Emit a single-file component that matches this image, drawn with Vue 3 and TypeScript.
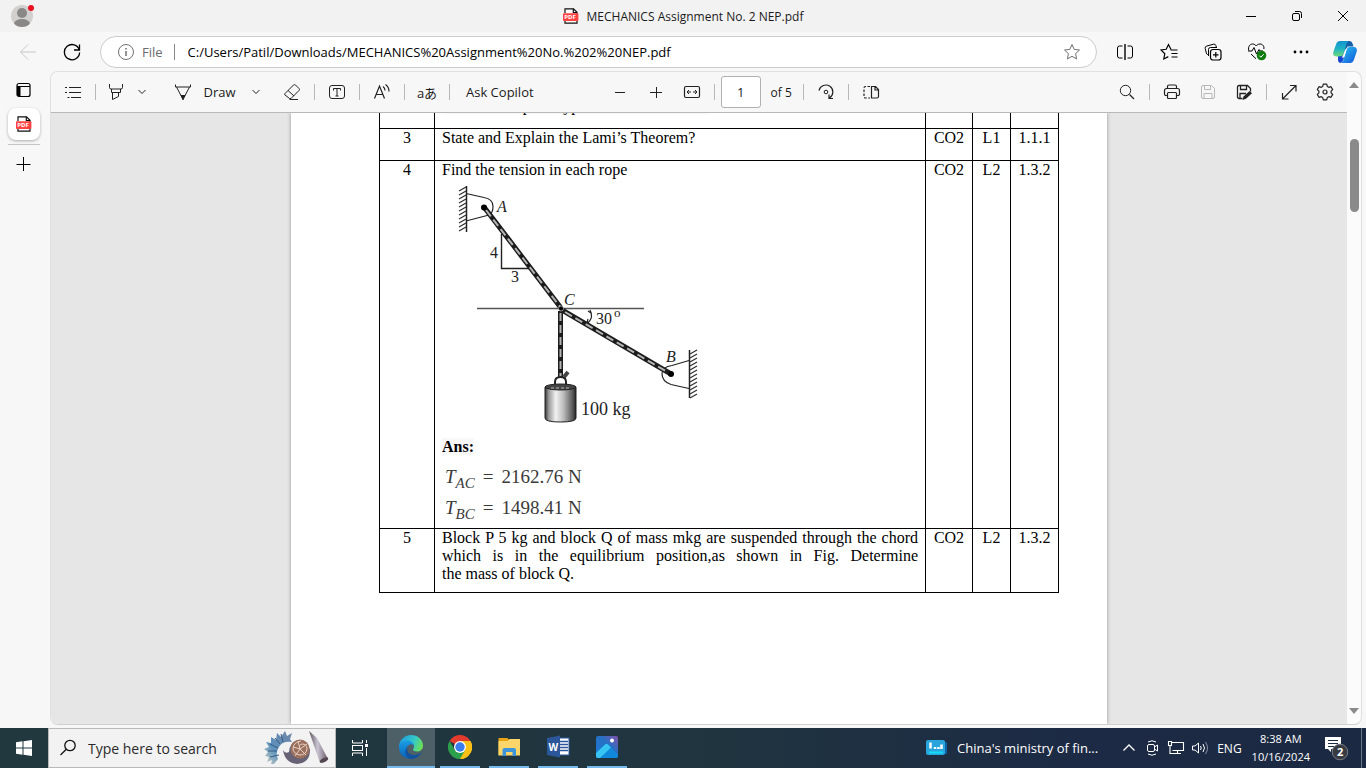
<script setup lang="ts">
import { ref } from 'vue'

interface Row {
  no: string
  co: string
  level: string
  code: string
  kind: 'text' | 'marked' | 'figure' | 'lines'
  lines: string[]
}

const url = ref('C:/Users/Patil/Downloads/MECHANICS%20Assignment%20No.%202%20NEP.pdf')
const page = ref('1')
const query = ref('')

const rows: Row[] = [
  { no: '2', co: 'CO2', level: 'L1', code: '1.1.1', kind: 'marked', lines: ['State and Explain types of Friction force?'] },
  { no: '3', co: 'CO2', level: 'L1', code: '1.1.1', kind: 'text', lines: ['State and Explain the Lami’s Theorem?'] },
  { no: '4', co: 'CO2', level: 'L2', code: '1.3.2', kind: 'figure', lines: ['Find the tension in each rope'] },
  {
    no: '5',
    co: 'CO2',
    level: 'L2',
    code: '1.3.2',
    kind: 'lines',
    lines: [
      'Block P 5 kg and block Q of mass mkg are suspended through the chord',
      'which is in the equilibrium position,as shown in Fig. Determine',
      'the mass of block Q.',
    ],
  },
]

const results = [
  { sub: 'AC', value: '2162.76 N' },
  { sub: 'BC', value: '1498.41 N' },
]

const hatchA = Array.from({ length: 11 }, (_, i) => `M466 ${187 + i * 4}l-7 4`).join('')
const hatchB = Array.from({ length: 12 }, (_, i) => `M690 ${354 + i * 4}l7 -4`).join('')
</script>

<template>
  <div class="screen">
    <header class="titlebar">
      <button class="avatar" aria-label="Profile">
        <svg width="24" height="24" viewBox="0 0 24 24">
          <defs><clipPath id="av"><circle cx="11" cy="12" r="11" /></clipPath></defs>
          <g clip-path="url(#av)">
            <rect width="24" height="24" fill="#d2d0ce" />
            <circle cx="11" cy="9" r="5" fill="#8a8886" />
            <ellipse cx="11" cy="20" rx="8" ry="5" fill="#8a8886" />
          </g>
          <circle cx="20" cy="4" r="3" fill="#e81123" />
        </svg>
      </button>
      <div class="doc-title">
        <svg width="16" height="16" viewBox="0 0 16 16">
          <path d="M2 5V.8h8.5L14 4.3V15.2H2V12" fill="#fff" stroke="#111" stroke-width="1.2" />
          <path d="M10.3.8v3.8H14" fill="none" stroke="#111" stroke-width="1.2" />
          <rect x="0" y="5.2" width="15.4" height="7.8" rx="1" fill="#ff4242" />
          <text x="1.3" y="11.4" class="pdf-mark">PDF</text>
        </svg>
        <span>MECHANICS Assignment No. 2 NEP.pdf</span>
      </div>
      <div class="window-controls">
        <button aria-label="Minimize"><svg width="12" height="12"><path d="M1 6.5h10" /></svg></button>
        <button aria-label="Restore">
          <svg width="12" height="12"><rect x="1.5" y="3.5" width="7" height="7" rx="1.5" /><path d="M4 1.5h4.5a2 2 0 0 1 2 2V8" /></svg>
        </button>
        <button aria-label="Close"><svg width="12" height="12"><path d="M1 1l10 10M11 1L1 11" /></svg></button>
      </div>
    </header>

    <nav class="navbar">
      <button class="nav-btn back" aria-label="Back">
        <svg width="18" height="18"><path d="M17 9H1.5M9 1.5L1.5 9l7.5 7.5" /></svg>
      </button>
      <button class="nav-btn reload" aria-label="Refresh">
        <svg width="18" height="18"><path d="M16.3 7A7.6 7.6 0 1 0 16.6 9.5M16.5 1.5V7H11" stroke-width="1.3" /></svg>
      </button>
      <div class="address">
        <button class="file-info">
          <svg width="18" height="18"><circle cx="9" cy="9" r="7.5" /><path d="M9 8v5M9 5v1.5" stroke-width="1.5" /></svg>
          <span>File</span>
        </button>
        <input v-model="url" aria-label="Address" spellcheck="false" />
        <button class="star" aria-label="Add to favorites">
          <svg width="18" height="18"><path d="M9 1.5l2.2 4.9 5.3.6-3.9 3.6 1 5.3L9 13.3l-4.6 2.6 1-5.3L1.500 7l5.300-.6z" /></svg>
        </button>
      </div>
      <div class="nav-tools">
        <button aria-label="Split screen">
          <svg width="18" height="18"><path d="M6.500 3H3.500a2 2 0 0 0-2 2v8a2 2 0 0 0 2 2h3M11.500 3h3a2 2 0 0 1 2 2v8a2 2 0 0 1-2 2h-3" /><path d="M9 1v16" stroke-width="1.400" /></svg>
        </button>
        <button aria-label="Favorites">
          <svg width="18" height="18"><path d="M11 6.500L8.500 1.500 6.200 6.300 1 7l3.800 3.700-1 5.300 4.500-2.400M10.500 7h7M11.500 10.500h6M11.500 14h6" stroke-width="1.200" /></svg>
        </button>
        <button aria-label="Collections">
          <svg width="18" height="18"><rect x="6.500" y="6.500" width="10.500" height="10.500" rx="2.500" stroke-width="1.200" /><path d="M11.800 9v5.500M9 11.800h5.500" stroke-width="1.200" /><path d="M5 13L3.500 11.500a2 2 0 0 1-1.200-1.500L1.200 5.500a2 2 0 0 1 1.500-2.400L9.500 1.200a2 2 0 0 1 2.400 1.400l.4 1.400M4.500 12V6.500a2 2 0 0 1 2-2H13" /></svg>
        </button>
        <button aria-label="Browser essentials">
          <svg width="20" height="20"><path d="M1.800 8.500C.8 4.500 3 2 5.500 2 7.500 2 8.500 3 9.200 4c.8-1 1.800-2 3.800-2 2.500 0 4.600 2.300 3.800 5M4 12l5 4.800M1 9h4l2-3.500 2.500 6.500L12 7.500l1 1.500h3" /><circle cx="14.500" cy="13.500" r="4.800" fill="#107c10" stroke="none" /><path d="M12.400 13.700l1.500 1.500 2.800-3" stroke="#fff" /></svg>
        </button>
        <button aria-label="Settings and more">
          <svg width="18" height="18" class="solid"><circle cx="3" cy="9" r="1.400" /><circle cx="9" cy="9" r="1.400" /><circle cx="15" cy="9" r="1.400" /></svg>
        </button>
        <button aria-label="Copilot">
          <svg width="24" height="24" class="solid">
            <defs>
              <linearGradient id="cp1" x1="0" y1="0" x2="0" y2="1"><stop offset="0" stop-color="#1493ce" /><stop offset=".5" stop-color="#20b2c4" /><stop offset="1" stop-color="#6fdc78" /></linearGradient>
              <linearGradient id="cp2" x1="0" y1="0" x2="1" y2="1"><stop offset="0" stop-color="#26c7f3" /><stop offset="1" stop-color="#1552d8" /></linearGradient>
            </defs>
            <path d="M8 1h8.500c2.500 0 3.300 3 4 5.500h-6L8 20c-.8 2-2.600 2-3 0z" fill="#155fa8" />
            <path d="M7 1h9c-2 1-2.600 3-3.200 5.500L10.500 14c-.6 1.700-1.700 2.500-3.500 2.500H3C.3 16.500-.2 14 .3 12L3 4.500C3.800 2 5 1 7 1z" fill="url(#cp1)" />
            <path d="M17 7h4c2.500 0 3.300 2.500 2.700 4.500L21 19.500c-.8 2.500-2 3.500-4 3.500H8c2-1 2.600-3 3.200-5.500L13.500 9.500C14.100 7.800 15.200 7 17 7z" fill="url(#cp2)" />
            <path d="M5 16.500h5l1 1c-.8 3-2 5.500-4 5.500-1.500 0-2-3-2-6.500z" fill="#1646d4" />
            <path d="M13.200 8.500c-.8.600-1.300 1.500-1.700 2.800l-1.300 4c-.3 1-.8 1.700-1.500 2.200l1.600.2c.8-.6 1.200-1.400 1.600-2.600l1.300-4.400c.3-.9.700-1.600 1.300-2.100z" fill="#fff" />
          </svg>
        </button>
      </div>
    </nav>

    <div class="middle">
      <aside class="tabs">
        <button class="side-btn" aria-label="Tab actions">
          <svg width="16" height="16"><rect x="1" y="1.500" width="13" height="13" rx="2" fill="none" stroke="#000" stroke-width="1.200" /><path d="M1 4h3.500v10.500H2.500L1 13zM1 4h13v1H1z" /></svg>
        </button>
        <button class="tab-card" aria-label="MECHANICS Assignment No. 2 NEP.pdf">
          <svg width="16" height="16" viewBox="0 0 16 16">
            <path d="M2 5V.8h8.500L14 4.300V15.200H2V12" fill="#fff" stroke="#111" stroke-width="1.200" />
            <path d="M10.300.8v3.800H14" fill="none" stroke="#111" stroke-width="1.200" />
            <rect x="0" y="5.200" width="15.400" height="7.800" rx="1" fill="#ff4242" />
            <text x="1.300" y="11.400" class="pdf-mark">PDF</text>
          </svg>
        </button>
        <hr />
        <button class="side-btn plus" aria-label="New tab">
          <svg width="16" height="16"><path d="M7.500 1v14M.5 8.500h14" stroke="#000" /></svg>
        </button>
      </aside>

      <main class="viewer">
        <div class="content">
          <div class="toolbar">
            <div class="group start">
              <button aria-label="Contents"><svg width="18" height="18"><path d="M5 4.500h12M5 9.500h12M7 14.500h10M1 4.500h2M1 9.500h2M3.500 14.500h2" /></svg></button>
              <i class="sep"></i>
              <button class="mark" aria-label="Highlight"><svg width="18" height="18"><path d="M2.500 1v3.500a1.500 1.500 0 0 0 1.500 1.500h10a1.500 1.500 0 0 0 1.500-1.500V1M4.500 6v3.500h9V6M5.500 9.500v7l6-3V9.500" /></svg></button>
              <button class="chev" aria-label="Highlight colors"><svg width="8" height="6"><path d="M.5 1L4 4.500 7.500 1" /></svg></button>
              <button class="draw"><svg width="18" height="18"><path d="M1.500 1.500V4h15V1.500M2.500 4L9 16.500 15.500 4M6.800 12.500h4.400" /><path d="M7.500 13h3L9 16.500z" fill="#222" /></svg><span>Draw</span></button>
              <button class="chev" aria-label="Draw options"><svg width="8" height="6"><path d="M.5 1L4 4.500 7.500 1" /></svg></button>
              <button class="erase" aria-label="Erase"><svg width="18" height="18"><path d="M2 10.500L10.500 2a1.500 1.500 0 0 1 2 0L16 5.500a1.500 1.500 0 0 1 0 2L8 15.500H6.500L2 12a1.200 1.200 0 0 1 0-1.500zM5 7.500l6 5.500M6.500 16.500H15" /></svg></button>
              <i class="sep"></i>
              <button aria-label="Add text"><svg width="18" height="18"><rect x="1.500" y="2.500" width="15" height="13" rx="2.500" /><path d="M5.500 7.500V5.500h7v2M9 5.500v7.500M7.500 13h3" /></svg></button>
              <i class="sep"></i>
              <button aria-label="Read aloud"><svg width="18" height="18"><path d="M1.500 15.500L6.500 3l5 12.500M3.300 11.500h6.500M10 3.500q2 1.500 2 4M12.500 1.500q3.500 2.500 3.500 7" stroke-width="1.200" /></svg></button>
              <i class="sep"></i>
              <button class="translate" aria-label="Translate">aあ</button>
              <i class="sep"></i>
              <button class="ask">Ask Copilot</button>
            </div>
            <div class="group middle-group">
              <button aria-label="Zoom out"><svg width="18" height="18"><path d="M4 9.500h10" /></svg></button>
              <button aria-label="Zoom in"><svg width="18" height="18"><path d="M3 9.500h12M9.500 4v11" /></svg></button>
              <button aria-label="Fit to width"><svg width="18" height="18"><rect x="1.500" y="3.500" width="15" height="11" rx="1.500" stroke-width="1.200" /><path d="M4 9h4M10 9h4M6 7L4 9l2 2M12 7l2 2-2 2" /></svg></button>
              <i class="sep"></i>
              <label class="page-no"><input v-model="page" aria-label="Page number" /><span>of 5</span></label>
              <i class="sep"></i>
              <button aria-label="Rotate"><svg width="18" height="18"><path d="M2 7.500a7 7 0 1 1 10.500 7.500M16 15.500h-4v-4" stroke-width="1.200" /><circle cx="9" cy="9" r="1.800" /></svg></button>
              <i class="sep"></i>
              <button aria-label="Page view"><svg width="18" height="18"><path d="M9.500 3.500h4l3 3v7a1.500 1.500 0 0 1-1.500 1.500H9.500zM13 3.500v3.500h3.500" stroke-width="1.200" /><path d="M8 3.500H3.500A1.500 1.500 0 0 0 2 5v8.500A1.500 1.500 0 0 0 3.500 15H8" stroke-dasharray="2.500 1.500" stroke-width="1.200" /></svg></button>
            </div>
            <div class="group end">
              <button aria-label="Find"><svg width="18" height="18"><circle cx="7.500" cy="7.500" r="5.200" /><path d="M11.500 11.500l4.500 4.500" stroke-width="1.200" /></svg></button>
              <i class="sep"></i>
              <button aria-label="Print"><svg width="18" height="18"><path d="M4.500 12.500H3A1.500 1.500 0 0 1 1.500 11V7.500a2 2 0 0 1 2-2h11a2 2 0 0 1 2 2V11a1.500 1.500 0 0 1-1.500 1.500h-1.500M4.500 5.500V3.500a1.500 1.500 0 0 1 1.500-1.500h6a1.500 1.500 0 0 1 1.500 1.500v2" stroke-width="1.200" /><rect x="4.500" y="9.500" width="9" height="6" rx="1" stroke-width="1.200" /></svg></button>
              <button class="dim" aria-label="Save" disabled><svg width="18" height="18"><path d="M2.500 4A1.500 1.500 0 0 1 4 2.500h8.500l3 3V14a1.500 1.500 0 0 1-1.500 1.500H4A1.500 1.500 0 0 1 2.500 14zM5.500 2.500v4h6v-4M5 15.500v-5h8v5" /></svg></button>
              <button aria-label="Save as"><svg width="18" height="18"><path d="M7.500 15.500H4A1.500 1.500 0 0 1 2.500 14V4A1.500 1.500 0 0 1 4 2.500h8.500l3 3v3M5.500 2.500v4h6v-4M5 15.500v-5h6" stroke-width="1.300" /><path d="M7.500 17l1-3.500 6-5.500 2.500 2.300-6 5.500z" fill="#222" stroke="none" /></svg></button>
              <i class="sep"></i>
              <button aria-label="Full screen"><svg width="18" height="18"><path d="M2.500 16L16 2.500M10 2.500h6v6M2.500 10v6h6" stroke-width="1.200" /></svg></button>
              <button aria-label="Settings"><svg width="18" height="18"><path d="M7.300 1.200h3.400l.6 2.200 1.500.9 2.200-.6 1.700 2.900L15.100 8.200v1.600l1.600 1.600-1.700 2.900-2.200-.6-1.500.9-.6 2.200H7.300l-.6-2.200-1.500-.9-2.200.6-1.700-2.900 1.600-1.600V8.200L1.300 6.600 3 3.700l2.200.6 1.500-.9z" stroke-linejoin="round" stroke-width="1.200" /><circle cx="9" cy="9" r="2" stroke-width="1.200" /></svg></button>
            </div>
          </div>

          <div class="canvas">
            <article class="paper">
              <table>
                <colgroup>
                  <col class="c-no" />
                  <col />
                  <col class="c-co" />
                  <col class="c-level" />
                  <col class="c-code" />
                </colgroup>
                <tbody>
                  <tr v-for="r in rows" :key="r.no" :class="r.kind">
                    <td class="mid">{{ r.no }}</td>
                    <td>
                      <p v-for="(line, i) in r.lines" :key="i" :class="{ full: i < r.lines.length - 1 }"><span>{{ line }}</span></p>
                      <template v-if="r.kind === 'figure'">
                        <svg class="figure" width="256" height="250" viewBox="442 184 256 250" role="img" aria-label="Rope diagram">
                          <defs>
                            <linearGradient id="can" x1="0" x2="1">
                              <stop offset="0" stop-color="#333" /><stop offset=".12" stop-color="#999" /><stop offset=".35" stop-color="#f2f2f2" /><stop offset=".6" stop-color="#bbb" /><stop offset=".9" stop-color="#555" /><stop offset="1" stop-color="#222" />
                            </linearGradient>
                          </defs>
                          <g fill="none" stroke="#222">
                            <path :d="hatchA" stroke="#333" stroke-width="1.300" />
                            <path d="M466.500 186v46" stroke-width="1.500" />
                            <path d="M466 193.500l18 4c6 1 9 4 9 9 0 4-1 7-4 8.500l-23 6" stroke-width="1.200" />
                            <path d="M501.500 234v34.500H530" stroke-width="1.400" />
                            <path d="M477 308.500H644" stroke="#555" stroke-width="1.500" />
                            <path :d="hatchB" stroke="#333" stroke-width="1.300" />
                            <path d="M689.500 350v48" stroke-width="1.500" />
                            <path d="M689 360.500l-17 5c-7 1-10 4-10 8 0 6 3 9 9 11l18 4" stroke-width="1.200" />
                            <path d="M590 310q4 7-2 13M588 311l3 2M587 323l1-4" stroke-width="1.200" />
                            <path class="rope" d="M484 207L561 308M562 310L671 374M560.500 311V378" />
                            <path class="strand" d="M486 210L561 308M565 312L669 373M560.500 313V378" />
                            <path d="M564 377l4-5" stroke-width="4" stroke="#444" />
                            <path d="M555 386v-4q0-5 5.500-5t5.500 5v4" stroke-width="2" />
                          </g>
                          <path d="M545 387v31q0 4 15.500 4t15.500-4v-31z" fill="url(#can)" stroke="#222" />
                          <ellipse cx="560.500" cy="387" rx="15.500" ry="3" fill="#444" stroke="#222" />
                          <path d="M551 388h18" stroke="#bbb" stroke-dasharray="3 2" />
                          <circle cx="484" cy="207.500" r="3" /><circle cx="671" cy="374" r="3" />
                          <circle cx="561" cy="308.500" r="2.500" stroke="#fff" stroke-width=".5" />
                          <g class="labels">
                            <text x="497" y="212" class="it">A</text>
                            <text x="490" y="258">4</text>
                            <text x="511" y="282">3</text>
                            <text x="564" y="305" class="it">C</text>
                            <text x="596" y="324">30</text>
                            <text x="614" y="317" class="small">o</text>
                            <text x="666" y="362" class="it">B</text>
                            <text x="581" y="415" class="big">100 kg</text>
                          </g>
                        </svg>
                        <p class="ans"><b>Ans:</b></p>
                        <p v-for="x in results" :key="x.sub" class="eq"><i>T<sub>{{ x.sub }}</sub></i><span>=</span><span>{{ x.value }}</span></p>
                      </template>
                    </td>
                    <td class="mid">{{ r.co }}</td>
                    <td class="mid">{{ r.level }}</td>
                    <td class="mid">{{ r.code }}</td>
                  </tr>
                </tbody>
              </table>
            </article>
          </div>
        </div>
        <div class="scrollbar">
          <svg width="10" height="6"><path d="M0 6L5 0l5 6z" fill="#8a8a8a" /></svg>
          <div class="thumb"></div>
          <svg class="down" width="10" height="6"><path d="M0 0L5 6l5-6z" fill="#8a8a8a" /></svg>
        </div>
      </main>
    </div>

    <footer class="taskbar">
      <button class="start-btn" aria-label="Start">
        <svg width="16" height="16" fill="#fff"><path d="M0 2.300L6.500 1.300V7.500H0zM7.500 1.200L16 0v7.500H7.500zM0 8.500h6.500v6.200L0 13.700zM7.500 8.500H16V16l-8.500-1.200z" /></svg>
      </button>
      <label class="search">
        <svg width="18" height="18" fill="none" stroke="#111" stroke-width="1.300"><circle cx="11" cy="6.500" r="5.200" /><path d="M7.300 10.300L1.500 16" /></svg>
        <input v-model="query" placeholder="Type here to search" aria-label="Type here to search" />
        <svg width="66" height="36" viewBox="264 730 66 36">
          <defs>
            <linearGradient id="cone" x1="0" x2="1"><stop offset="0" stop-color="#5b5058" /><stop offset=".45" stop-color="#c9c4d2" /><stop offset="1" stop-color="#6a5a66" /></linearGradient>
            <linearGradient id="fan" x1="0" y1="1" x2="1" y2="0"><stop offset="0" stop-color="#cfd3c4" /><stop offset=".4" stop-color="#5d92bd" /><stop offset="1" stop-color="#7182a4" /></linearGradient>
          </defs>
          <path d="M271 764l1-4-5 2 2-5-4-1 3-4-4-3 5-2-3-5 5 1 0-6 5 3 1-7 4 4 4-6 2 5 5-3-2 6 2 3q-10-1-13 5-4 6-1 12l-4 5z" fill="url(#fan)" />
          <path d="M270 757l9-2M268 751l9 0M270 744l8 4M275 738l5 6M281 734l2 8" stroke="#385d82" />
          <path d="M283 750q2 4 6 2 1-10 9-12 9 0 12 10 0 13-13 14-12-1-14-14z" fill="#686276" />
          <circle cx="300" cy="749" r="9.500" fill="#9b705e" />
          <path d="M300 749q-2-4 2-5 5 0 5 5-1 6-7 6-7-1-7-7 1-6 8-7M300 749l-5 7M300 749l6 6M300 749l7-5M300 749l-2-8M300 749l-7-2" fill="none" stroke="#e6cfc2" />
          <path d="M309 731l8 7 11 21q-2 4-8 4z" fill="url(#cone)" />
          <ellipse cx="324" cy="760" rx="4.500" ry="2" fill="#524751" transform="rotate(-25 324 760)" />
        </svg>
      </label>
      <button class="app taskview" aria-label="Task View">
        <svg width="18" height="18" fill="none" stroke="#fff"><path d="M1.500 1v3h10V1M1.500 17v-3h10v3" /><rect x="1.500" y="6.500" width="10" height="5" /><path d="M15.500 1v3M15.500 9v8" /><path d="M14 6.500h3" stroke-width="3" /></svg>
      </button>
      <button class="app active" aria-label="Microsoft Edge">
        <svg width="24" height="24">
          <defs>
            <linearGradient id="e1" x1="0" y1=".3" x2="1" y2=".6"><stop offset="0" stop-color="#1d9be2" /><stop offset=".6" stop-color="#35c9c5" /><stop offset="1" stop-color="#6fe052" /></linearGradient>
            <linearGradient id="e2" x1="0" y1="0" x2="0" y2="1"><stop offset="0" stop-color="#1a9ee6" /><stop offset="1" stop-color="#0a62b8" /></linearGradient>
          </defs>
          <path d="M0 12C0 5 5.500 0 12 0c7 0 12 5 12 10.500 0 4-3 6-6 6s-4-1-4-2 1-1 1-3c0-3-3-5-6.500-5C4 6.500.500 9 0 12z" fill="url(#e1)" />
          <path d="M0 12c0-4 4-6.500 8.500-6.500 3.500 0 6.500 2.500 6.500 5.500-1-1.500-2.500-2-4-1.500-3 1-4 4-3 7 1 4 4 6 8 6-6 3-16 0-16-10.500z" fill="url(#e2)" />
          <path d="M8.500 11.500c-1.500 4 1 8 6 8.500 3 .3 6-1 8-2.500-2 4-6 6.500-10.500 6.500-5-1-8-7-3.500-12.500z" fill="#1253a0" />
        </svg>
      </button>
      <button class="app open" aria-label="Google Chrome">
        <svg width="24" height="24">
          <path d="M12 12L1.600 6A12 12 0 0 1 22.400 6z" fill="#e33b2e" />
          <path d="M12 12L22.400 6A12 12 0 0 1 12 24z" fill="#fbc116" />
          <path d="M12 6h10.400A12 12 0 0 1 12 24l5-9z" fill="#fbc116" />
          <path d="M1.600 6A12 12 0 0 0 12 24l5.200-9L12 12 6.800 15z" fill="#2da04c" />
          <circle cx="12" cy="12" r="6" fill="#fff" /><circle cx="12" cy="12" r="4.700" fill="#3b7ded" />
        </svg>
      </button>
      <button class="app open" aria-label="File Explorer">
        <svg width="24" height="24"><path d="M1.500 3h9l2 2.500H22V20H1.500z" fill="#e8a317" /><path d="M1.500 6h9l2-2H23v16.500H1.500z" fill="#fdd66b" /><path d="M5.500 21v-6a2 2 0 0 1 2-2h9.500a2 2 0 0 1 2 2v6h-3.500v-4h-6.500v4z" fill="#3c95d8" /></svg>
      </button>
      <button class="app open" aria-label="Word">
        <svg width="24" height="24"><rect x="11" y="3" width="12" height="17" fill="#fff" stroke="#2b579a" /><path d="M14 6.500h8M14 9.500h8M14 12.500h8M14 15.500h8" stroke="#2b579a" stroke-width="1.400" /><path d="M1 3L14 .5v22L1 20z" fill="#2b579a" /><text x="2.500" y="15.500" class="word-mark">W</text></svg>
      </button>
      <button class="app open" aria-label="Photos">
        <svg width="24" height="24">
          <defs><linearGradient id="ph" x1="0" y1="1" x2="1" y2="0"><stop offset="0" stop-color="#1877d4" /><stop offset=".6" stop-color="#2870c4" /><stop offset="1" stop-color="#8350a8" /></linearGradient></defs>
          <rect x="1" y="1" width="22" height="22" rx="2" fill="url(#ph)" />
          <path d="M1 18l9-8.500a2 2 0 0 1 3 0L23 20v1a2 2 0 0 1-2 2H3a2 2 0 0 1-2-2z" fill="#1088dc" />
          <path d="M1 18l9-8.500a2 2 0 0 1 3 0l3 3L5 23H3a2 2 0 0 1-2-2z" fill="#37c6f4" />
          <circle cx="17" cy="5.500" r="2" fill="#fff" />
        </svg>
      </button>

      <button class="news">
        <svg width="22" height="18"><rect x="14" y="3" width="7" height="12" rx="1" fill="#0b63a8" /><rect x="0" y="1" width="19" height="15" rx="2" fill="#2aa4dc" /><path d="M4.500 3.500v6M9 8v2M12.500 8v2M15.500 5.500v4.500" stroke="#fff" stroke-width="2.500" /><path d="M3 13.500h14" stroke="#10dff5" stroke-width="2" /></svg>
        <span>China's ministry of fin...</span>
      </button>
      <div class="tray">
        <button class="more" aria-label="Show hidden icons"><svg width="14" height="18"><path d="M1.500 11.500L7 6l5.500 5.500" stroke-width="1.300" /></svg></button>
        <button aria-label="Meet Now"><svg width="16" height="18"><rect x="2.500" y="5.500" width="7" height="7" rx="1.500" /><path d="M9.500 8l3-2v6l-3-2M3 3q4-2.500 8 0M3 15q4 2.500 8 0" /></svg></button>
        <button aria-label="Network"><svg width="18" height="18"><path d="M5 3.500h11.500v8H5.500M1.500 2.500h3v4h-3zM3 6.500V14.500h11M10.500 11.500v3" stroke-width="1.100" /></svg></button>
        <button aria-label="Volume"><svg width="18" height="18"><path d="M1.500 7v4H4l3.500 3V4L4 7zM9.500 7q1.500 2 0 4M12 5q3 4 0 8" /><path d="M14.500 3q4 6 0 12" stroke="#8791a3" /></svg></button>
      </div>
      <button class="lang">ENG</button>
      <button class="clock"><span>8:38 AM</span><span>10/16/2024</span></button>
      <button class="notify" aria-label="2 notifications">
        <svg width="26" height="26"><path d="M1 1h16v12H7v3l-3-3H1z" fill="#fff" /><path d="M4 4.500h10M4 7.500h10M4 10.500h6" stroke="#1d2c45" /><circle cx="16" cy="16" r="7.800" fill="#383b42" stroke="#777b84" /><text x="13" y="20" class="badge">2</text></svg>
      </button>
      <i class="desk"></i>
    </footer>
  </div>
</template>

<style>
html,
body {
  margin: 0;
  overflow: hidden;
}
</style>

<style scoped>
* {
  box-sizing: border-box;
}
.screen {
  height: 100vh;
  display: flex;
  flex-direction: column;
  background: #f7f7f7;
  font-family: 'Segoe UI', 'Open Sans', 'Noto Sans', 'Noto Sans CJK JP', sans-serif;
  color: #1b1b1b;
}
button {
  border: 0;
  padding: 0;
  background: none;
  font: inherit;
  color: inherit;
  display: flex;
  align-items: center;
  justify-content: center;
  flex: none;
}
input {
  border: 0;
  padding: 0;
  background: none;
  font: inherit;
  color: inherit;
  outline: 0;
  min-width: 0;
}
svg {
  display: block;
  flex: none;
}
.titlebar {
  height: 32px;
  flex: none;
  background: #f2f2f2;
  display: grid;
  grid-template-columns: 1fr auto 1fr;
  align-items: center;
}
.avatar {
  justify-self: start;
  margin-left: 11px;
}
.doc-title {
  display: flex;
  align-items: center;
  gap: 8px;
  font-size: 12px;
}
.pdf-mark {
  font: bold 6px 'Open Sans', sans-serif;
  fill: #fff;
}
.window-controls {
  justify-self: end;
  display: flex;
}
.window-controls button {
  width: 46px;
  height: 32px;
}
.window-controls svg,
.navbar svg,
.toolbar svg,
.tray svg {
  fill: none;
  stroke: #000;
}
.navbar {
  height: 39px;
  flex: none;
  display: flex;
  align-items: center;
  padding: 0 5px 0 12px;
}
.nav-btn {
  width: 32px;
  height: 32px;
}
.navbar .back svg {
  stroke: #c8c8c8;
}
.reload {
  margin: 0 12px;
}
.address {
  flex: 1;
  height: 32px;
  border: 1px solid #ccc;
  border-radius: 16px;
  background: #fff;
  display: flex;
  align-items: center;
  padding: 0 15px 0 16px;
  font-size: 13px;
  color: #000;
}
.file-info {
  gap: 7px;
  color: #6b6b6b;
  padding-right: 11px;
  border-right: 1px solid #888;
  height: 16px;
}
.address .file-info svg,
.address .star svg {
  stroke: #707070;
}
.address input {
  flex: 1;
  margin: 0 13px;
}
.nav-tools {
  display: flex;
  gap: 12px;
  margin-left: 12px;
}
.nav-tools button {
  width: 32px;
  height: 32px;
}
.navbar svg.solid {
  fill: #000;
  stroke: none;
}
.middle {
  flex: 1;
  min-height: 0;
  display: flex;
  padding: 0 4px 3px 0;
}
.tabs {
  width: 50px;
  display: flex;
  flex-direction: column;
  align-items: center;
  padding-right: 3px;
}
.side-btn {
  width: 32px;
  height: 32px;
  margin-top: 3px;
}
.tab-card {
  width: 32px;
  height: 32px;
  margin-top: 2px;
  background: #fff;
  border-radius: 8px;
  box-shadow: 0 1px 3px rgba(0, 0, 0, 0.3);
}
.tabs hr {
  width: 32px;
  margin: 4px 0 0;
  border: 0;
  border-top: 1px solid #c4c4c4;
}
.viewer {
  flex: 1;
  min-width: 0;
  display: flex;
  border: 1px solid #e0e0e0;
  border-bottom-color: #d0d0d0;
  border-radius: 8px;
  overflow: hidden;
  background: #fbfbfb;
}
.content {
  flex: 1;
  min-width: 0;
  display: flex;
  flex-direction: column;
}
.toolbar {
  height: 41px;
  flex: none;
  background: #f7f7f7;
  border-bottom: 1px solid #b8b8b8;
  display: flex;
  align-items: center;
  padding: 0 6px;
  font-size: 13px;
}
.toolbar svg {
  stroke: #222;
}
.group {
  display: flex;
  align-items: center;
}
.group button {
  width: 32px;
  height: 32px;
}
.sep {
  width: 1px;
  height: 16px;
  margin: 0 6px;
  background: #b8b8b8;
}
.group .mark {
  width: 28px;
}
.group .chev {
  width: 24px;
}
.group .draw {
  width: 78px;
  margin-left: 12px;
  gap: 11px;
}
.group .erase {
  margin-left: 8px;
}
.group .translate {
  font-size: 13px;
}
.group .ask {
  width: auto;
  padding: 0 10px;
}
.middle-group {
  margin-left: 60px;
}
.middle-group button + button {
  margin-left: 4px;
}
.page-no {
  display: flex;
  align-items: center;
}
.page-no input {
  width: 40px;
  height: 32px;
  border: 1px solid #b0b0b0;
  border-radius: 3px;
  background: #fff;
  text-align: center;
}
.page-no span {
  margin: 0 5px 0 10px;
  font-size: 12px;
}
.end {
  margin-left: auto;
}
.end button + button {
  margin-left: 4px;
}
.toolbar .dim svg {
  stroke: #b8b8b8;
}
.canvas {
  flex: 1;
  min-height: 0;
  overflow: hidden;
  background: #e6e6e6;
  display: flex;
  justify-content: center;
}
.paper {
  width: 816px;
  background: #fff;
  box-shadow: 0 0 4px rgba(0, 0, 0, 0.35);
  padding: 0 48px 0 88px;
}
table {
  width: 100%;
  margin-top: -17px;
  table-layout: fixed;
  border-collapse: collapse;
  font: 16px/18px 'Liberation Serif', 'Times New Roman', serif;
  color: #000;
}
.c-no {
  width: 55px;
}
.c-co {
  width: 47px;
}
.c-level {
  width: 38px;
}
.c-code {
  width: 48px;
}
td {
  border: 1px solid #000;
  height: 32px;
  padding: 0 7px;
  vertical-align: top;
}
td.mid {
  padding: 0;
  text-align: center;
}
.figure td {
  height: 368px;
}
.lines td {
  height: 64px;
}
p {
  margin: 0;
}
.full {
  text-align: justify;
  text-align-last: justify;
}
.marked p span {
  background: #f8f8f8;
}
td .figure {
  margin-top: 5px;
}
.rope {
  stroke: #1c1c1c;
  stroke-width: 5;
}
.strand {
  stroke: #b4b4b4;
  stroke-width: 2;
  stroke-dasharray: 8 4;
}
.labels {
  fill: #222;
  font-size: 16px;
}
.labels .it {
  font-style: italic;
}
.labels .big {
  font-size: 18px;
}
.labels .small {
  font-size: 13px;
}
.ans {
  margin-top: 4px;
}
.ans b {
  background: #f8f8f8;
}
.eq {
  display: flex;
  height: 31px;
  align-items: center;
  gap: 8px;
  padding-left: 3px;
  font-size: 19px;
  color: #3a3a3a;
}
.ans + .eq {
  margin-top: 5px;
}
.eq sub {
  font-size: 15px;
  line-height: 0;
}
.scrollbar {
  width: 14px;
  display: flex;
  flex-direction: column;
  align-items: center;
  padding: 10px 0;
}
.thumb {
  width: 9px;
  height: 73px;
  margin-top: 51px;
  border-radius: 5px;
  background: #8a8a8a;
}
.down {
  margin-top: auto;
}
.taskbar {
  height: 40px;
  flex: none;
  display: flex;
  align-items: stretch;
  background: linear-gradient(90deg, #21383f, #20353f 50%, #1c2a45 80%, #1b2942);
  color: #fff;
}
.start-btn {
  width: 48px;
}
.search {
  width: 288px;
  background: #f2f2f2;
  border: 1px solid #b9b9b9;
  display: flex;
  align-items: center;
  padding: 0 5px 0 10px;
  font-size: 14px;
}
.search input {
  flex: 1;
  margin-left: 11px;
}
.search input::placeholder {
  color: #2b2b2b;
  opacity: 1;
}
.app {
  width: 48px;
  margin-right: 1px;
}
.taskview {
  margin-right: 3px;
}
.active {
  background: #4d6067;
  border-bottom: 2px solid #76b9ed;
}
.open {
  width: 40px;
  margin: 0 5px 0 4px;
  border-bottom: 2px solid #76b9ed;
}
.word-mark {
  font: bold 10px 'Open Sans', sans-serif;
  fill: #fff;
}
.news {
  margin-left: auto;
  gap: 9px;
  font-size: 13px;
}
.tray {
  display: flex;
  gap: 6px;
  margin-left: 24px;
}
.tray svg {
  stroke: #fff;
}
.tray .more {
  margin-right: 3px;
}
.lang {
  margin-left: 8px;
  font-size: 12px;
}
.clock {
  flex-direction: column;
  margin-left: 10px;
  font-size: 11px;
  line-height: 18px;
}
.notify {
  margin: 2px 11px 0 14px;
}
.badge {
  font: bold 11px 'Open Sans', sans-serif;
  fill: #fff;
}
.desk {
  width: 5px;
  border-left: 1px solid #6b7584;
}
</style>
